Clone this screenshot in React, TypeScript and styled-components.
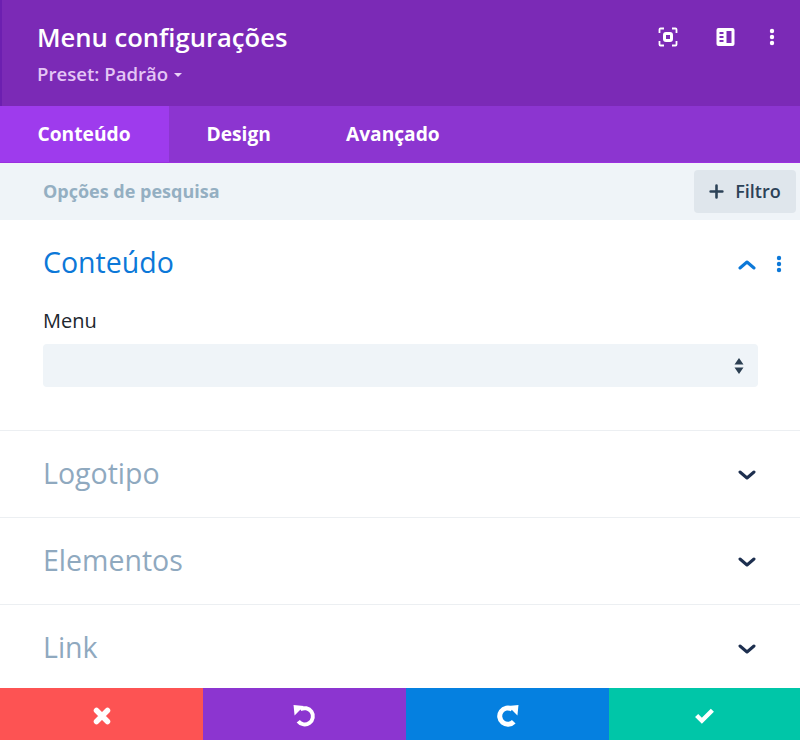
import React from "react";
import styled, { createGlobalStyle } from "styled-components";

const Global = createGlobalStyle`
  html, body { margin: 0; padding: 0; background: #fff; }
  * { box-sizing: border-box; }
`;

const Panel = styled.div`
  width: 800px;
  height: 740px;
  display: flex;
  flex-direction: column;
  overflow: hidden;
  font-family: "Open Sans", "Noto Sans", sans-serif;
`;

const Header = styled.header`
  height: 106px;
  flex: none;
  background: #7b2ab6;
  border-left: 2px solid #6c1fb0;
  padding: 20px 25px 0 35px;
  display: flex;
  justify-content: space-between;
  align-items: flex-start;
`;

const TitleBlock = styled.div`
  display: flex;
  flex-direction: column;
`;

const Title = styled.div`
  font-size: 25.6px;
  line-height: 35px;
  font-weight: 600;
  color: #fff;
`;

const Preset = styled.div`
  margin-top: 6px;
  font-size: 18.6px;
  line-height: 25px;
  font-weight: 600;
  color: #e4c6f5;
  display: flex;
  align-items: center;
  gap: 6px;
`;

const Caret = styled.span`
  width: 0;
  height: 0;
  margin-top: 2px;
  border-left: 4px solid transparent;
  border-right: 4px solid transparent;
  border-top: 4px solid #e9d2f7;
`;

const HeaderIcons = styled.div`
  display: flex;
  align-items: center;
  gap: 37.5px;
  margin-top: 7px;
`;

const HeaderDots = styled.div`
  display: flex;
  margin-left: -3px;
`;

const Tabs = styled.nav`
  height: 57px;
  flex: none;
  display: flex;
  background: #8c35d0;
  border-bottom: 1px solid #9b2fe0;
`;

const Tab = styled.div<{ $active?: boolean }>`
  width: ${(p) => (p.$active ? "169px" : "auto")};
  padding: 0 37.5px 2px;
  display: flex;
  align-items: center;
  font-size: 19.2px;
  font-weight: 700;
  color: #fff;
  background: ${(p) => (p.$active ? "#9e3bed" : "transparent")};
`;

const SearchBar = styled.div`
  height: 57px;
  flex: none;
  background: #eff4f8;
  display: flex;
  align-items: center;
  justify-content: space-between;
  padding: 0 4px 0 43px;
`;

const SearchText = styled.div`
  font-size: 18px;
  font-weight: 700;
  color: #94afc2;
  margin-top: -1px;
`;

const FilterButton = styled.div`
  width: 102px;
  height: 43px;
  margin-top: -1px;
  background: #dfe6ec;
  border-radius: 4px;
  display: flex;
  align-items: center;
  justify-content: center;
  gap: 11px;
  font-size: 18px;
  font-weight: 600;
  color: #2c4257;
`;

const Section = styled.section<{ $height: number }>`
  height: ${(p) => p.$height}px;
  flex: none;
  padding: 0 18px 0 43px;
  border-bottom: 1px solid #eceff2;
`;

const LastSection = styled(Section)`
  border-bottom: none;
  flex: 1;
`;

const SectionHead = styled.div`
  padding-top: 23px;
  display: flex;
  align-items: center;
  justify-content: space-between;
`;

const SectionTitle = styled.div<{ $open?: boolean }>`
  font-size: 28.5px;
  line-height: 39px;
  font-weight: 400;
  color: ${(p) => (p.$open ? "#0c78d8" : "#8fa9bf")};
`;

const SectionIcons = styled.div`
  display: flex;
  align-items: center;
  gap: 20px;
  margin-top: 3px;
`;

const ClosedChevron = styled.div`
  display: flex;
  margin: 3px 26px 0 0;
`;

const FieldLabel = styled.div`
  margin-top: 25px;
  font-size: 20px;
  line-height: 28px;
  font-weight: 500;
  color: #20272e;
`;

const SelectBox = styled.div`
  margin: 9px 24px 0 0;
  height: 43px;
  border-radius: 4px;
  background: #eff4f8;
  display: flex;
  align-items: center;
  justify-content: flex-end;
  padding-right: 14px;
`;

const Footer = styled.footer`
  height: 52px;
  flex: none;
  display: grid;
  grid-template-columns: 203px 203px 203px 191px;
`;

const FooterButton = styled.div<{ $bg: string }>`
  background: ${(p) => p.$bg};
  display: flex;
  align-items: center;
  justify-content: center;
  padding-top: 3px;
`;

const Chevron = ({ up, color }: { up?: boolean; color: string }) => (
  <svg width="18" height="11" viewBox="0 0 18 11" fill="none">
    <path
      d={up ? "M2 9 L9 3 L16 9" : "M2 2 L9 8 L16 2"}
      stroke={color}
      strokeWidth="3"
      strokeLinecap="round"
      strokeLinejoin="round"
    />
  </svg>
);

const Dots = ({ color }: { color: string }) => (
  <svg width="6" height="18" viewBox="0 0 6 18" fill={color}>
    <circle cx="3" cy="3" r="2.2" />
    <circle cx="3" cy="9" r="2.2" />
    <circle cx="3" cy="15" r="2.2" />
  </svg>
);

const FocusIcon = () => (
  <svg width="20" height="20" viewBox="0 0 20 20" fill="none" stroke="#fff" strokeWidth="1.8">
    <path d="M1.5 6 V2.500 Q1.500 1.500 2.500 1.500 H6" />
    <path d="M14 1.500 H17.500 Q18.500 1.500 18.500 2.500 V6" />
    <path d="M18.500 14 V17.500 Q18.500 18.500 17.500 18.500 H14" />
    <path d="M6 18.500 H2.500 Q1.500 18.500 1.500 17.500 V14" />
    <rect x="6.500" y="6.500" width="7" height="7" rx="1.500" strokeWidth="3" />
  </svg>
);

const SidebarIcon = () => (
  <svg width="19" height="18" viewBox="0 0 18 18">
    <path
      fill="#fff"
      fillRule="evenodd"
      d="M2 0 H16 Q18 0 18 2 V16 Q18 18 16 18 H2 Q0 18 0 16 V2 Q0 0 2 0 Z M10 3 V15 H15 V3 Z M3 4 V6 H7 V4 Z M3 8 V10 H7 V8 Z M3 12 V14 H7 V12 Z"
    />
  </svg>
);

const PlusIcon = () => (
  <svg width="15" height="15" viewBox="0 0 14 14" stroke="#2c4257" strokeWidth="2.400" strokeLinecap="round">
    <path d="M7 1.500 V12.500 M1.500 7 H12.500" />
  </svg>
);

const UpDown = () => (
  <svg width="10" height="18" viewBox="0 0 10 18" fill="#2c3f52">
    <path d="M5 1 L9.500 7.500 H0.500 Z M5 17 L0.500 10.500 H9.500 Z" />
  </svg>
);

const CloseIcon = () => (
  <svg width="18" height="18" viewBox="0 0 18 18" stroke="#fff" strokeWidth="5.500" strokeLinecap="round">
    <path d="M3.500 3.500 L14.500 14.500 M14.500 3.500 L3.500 14.500" />
  </svg>
);

const UndoIcon = () => (
  <svg width="23" height="23" viewBox="0 0 22 22" fill="none">
    <path d="M7 5.200 A7.800 7.800 0 1 1 5 16.500" stroke="#fff" strokeWidth="3.800" />
    <path d="M0.500 1 L10.500 2 L1.500 11 Z" fill="#fff" />
  </svg>
);

const RedoIcon = () => (
  <svg width="23" height="23" viewBox="0 0 22 22" fill="none">
    <path d="M15.500 5 A7.800 7.800 0 1 0 17 17" stroke="#fff" strokeWidth="4.800" />
    <path d="M21.500 1 L11.500 2 L20.500 11 Z" fill="#fff" />
  </svg>
);

const CheckIcon = () => (
  <svg width="21" height="17" viewBox="0 0 20 16" fill="none">
    <path d="M2.500 8 L7.500 13 L17.500 3" stroke="#fff" strokeWidth="4.200" />
  </svg>
);

export default function App() {
  return (
    <Panel>
      <Global />
      <Header>
        <TitleBlock>
          <Title>Menu configurações</Title>
          <Preset>
            Preset: Padrão <Caret />
          </Preset>
        </TitleBlock>
        <HeaderIcons>
          <FocusIcon />
          <SidebarIcon />
          <HeaderDots>
            <Dots color="#fff" />
          </HeaderDots>
        </HeaderIcons>
      </Header>
      <Tabs>
        <Tab $active>Conteúdo</Tab>
        <Tab>Design</Tab>
        <Tab>Avançado</Tab>
      </Tabs>
      <SearchBar>
        <SearchText>Opções de pesquisa</SearchText>
        <FilterButton>
          <PlusIcon />
          Filtro
        </FilterButton>
      </SearchBar>
      <Section $height={211}>
        <SectionHead>
          <SectionTitle $open>Conteúdo</SectionTitle>
          <SectionIcons>
            <Chevron up color="#0c78d8" />
            <Dots color="#0c78d8" />
          </SectionIcons>
        </SectionHead>
        <FieldLabel>Menu</FieldLabel>
        <SelectBox>
          <UpDown />
        </SelectBox>
      </Section>
      <Section $height={87}>
        <SectionHead>
          <SectionTitle>Logotipo</SectionTitle>
          <ClosedChevron>
            <Chevron color="#1d2f4f" />
          </ClosedChevron>
        </SectionHead>
      </Section>
      <Section $height={87}>
        <SectionHead>
          <SectionTitle>Elementos</SectionTitle>
          <ClosedChevron>
            <Chevron color="#1d2f4f" />
          </ClosedChevron>
        </SectionHead>
      </Section>
      <LastSection $height={83}>
        <SectionHead>
          <SectionTitle>Link</SectionTitle>
          <ClosedChevron>
            <Chevron color="#1d2f4f" />
          </ClosedChevron>
        </SectionHead>
      </LastSection>
      <Footer>
        <FooterButton $bg="#fd5353">
          <CloseIcon />
        </FooterButton>
        <FooterButton $bg="#8c35d0">
          <UndoIcon />
        </FooterButton>
        <FooterButton $bg="#0580e0">
          <RedoIcon />
        </FooterButton>
        <FooterButton $bg="#00c6a8">
          <CheckIcon />
        </FooterButton>
      </Footer>
    </Panel>
  );
}
